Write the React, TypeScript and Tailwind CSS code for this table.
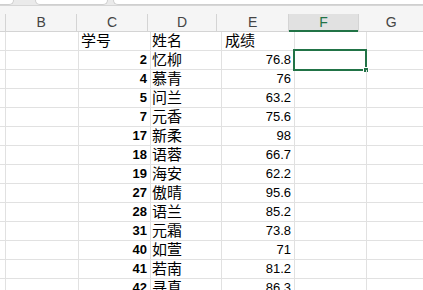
const rows: [string, string, string][] = [
  ["2", "忆柳", "76.8"],
  ["4", "慕青", "76"],
  ["5", "问兰", "63.2"],
  ["7", "元香", "75.6"],
  ["17", "新柔", "98"],
  ["18", "语蓉", "66.7"],
  ["19", "海安", "62.2"],
  ["27", "傲晴", "95.6"],
  ["28", "语兰", "85.2"],
  ["31", "元霜", "73.8"],
  ["40", "如萱", "71"],
  ["41", "若南", "81.2"],
  ["42", "寻真", "86.3"],
];

const font = { fontFamily: '"Liberation Sans", "Noto Sans CJK SC", sans-serif' };

function Row({ children }: { children: React.ReactNode }) {
  return <div className="flex h-[19px] border-b border-[#e1e1e1]">{children}</div>;
}

export default function App() {
  return (
    <div className="h-[290px] w-[423px] overflow-hidden bg-white text-black" style={font}>
      {/* tab strip */}
      <div className="flex h-[14px] bg-[#f5f5f5]">
        <div className="flex h-[6px] w-full items-start border-b border-[#d6d6d6] bg-[#eaeaea]">
          <div className="h-[5px] w-[14px] rounded-br-[5px] border-b border-r border-[#cfcfcf] bg-white" />
          <div className="ml-[21px] h-[5px] w-[73px] rounded-b-[5px] border-x border-b border-[#cfcfcf] bg-white" />
          <div className="ml-[5px] h-[5px] flex-1 rounded-bl-[5px] border-b border-l border-[#cfcfcf] bg-white" />
        </div>
      </div>

      {/* column header */}
      <div className="flex h-[18px] border-b border-[#d4d4d4] bg-[#f5f5f5] text-[14px] leading-[17px] text-[#444]">
        <div className="w-[6px] border-r border-[#d4d4d4]" />
        <div className="w-[73px] border-r border-[#d4d4d4] text-center">B</div>
        <div className="w-[72px] border-r border-[#d4d4d4] text-center">C</div>
        <div className="w-[71px] border-r border-[#d4d4d4] text-center">D</div>
        <div className="w-[73px] border-r border-[#d4d4d4] text-center">E</div>
        <div className="relative -mb-px h-[18px] w-[72px] border-r border-[#d4d4d4] bg-[#e1e1e1] text-center text-[#217346]">
          F
          <div className="absolute inset-x-0 bottom-0 h-[2px] bg-[#217346]" />
        </div>
        <div className="w-[65px] text-center">G</div>
      </div>

      {/* title row */}
      <Row>
        <div className="w-[6px] border-r border-[#e1e1e1]" />
        <div className="w-[73px] border-r border-[#e1e1e1]" />
        <div className="w-[72px] border-r border-[#e1e1e1] pl-[2px] text-[15px] leading-[18px]">学号</div>
        <div className="w-[71px] border-r border-[#e1e1e1] pl-[1px] text-[15px] leading-[18px]">姓名</div>
        <div className="w-[73px] border-r border-[#e1e1e1] pl-[3px] text-[15px] leading-[18px]">成绩</div>
        <div className="w-[72px] border-r border-[#e1e1e1]" />
        <div className="flex-1" />
      </Row>

      {rows.map(([id, name, score], i) => (
        <Row key={id}>
          <div className="w-[6px] border-r border-[#e1e1e1]" />
          <div className="w-[73px] border-r border-[#e1e1e1]" />
          <div className="w-[72px] border-r border-[#e1e1e1] pr-[3px] text-right text-[13px] font-bold leading-[18px]">{id}</div>
          <div className="w-[71px] border-r border-[#e1e1e1] pl-[1px] text-[15px] leading-[18px]">{name}</div>
          <div className="w-[73px] border-r border-[#e1e1e1] pr-[3px] text-right text-[13px] leading-[18px]">{score}</div>
          <div className="relative w-[72px] border-r border-[#e1e1e1]">
            {i === 0 && (
              <div className="absolute -left-[2px] -top-[2px] h-[22px] w-[74px] border-2 border-[#217346]">
                <div className="absolute -bottom-[4px] -right-[4px] h-[6px] w-[6px] border border-white bg-[#217346]" />
              </div>
            )}
          </div>
          <div className="flex-1" />
        </Row>
      ))}
    </div>
  );
}
